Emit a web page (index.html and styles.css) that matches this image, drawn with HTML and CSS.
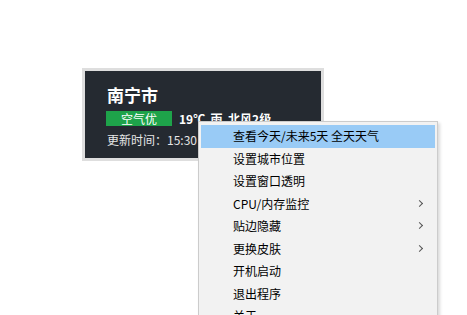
FILE: index.html
```html
<!DOCTYPE html>
<html>
<head>
  <title>天气</title>
  <link rel="stylesheet" href="styles.css">
</head>
<body>
  <div class="widget">
    <div class="city">南宁市</div>
    <div class="now">
      <span class="aqi">空气优</span>
      <span class="info">19℃&nbsp; 雨&nbsp; 北风2级</span>
    </div>
    <div class="update">更新时间：15:30</div>
  </div>

  <ul class="menu">
    <li class="active">查看今天/未来5天 全天天气</li>
    <li>设置城市位置</li>
    <li>设置窗口透明</li>
    <li class="sub">CPU/内存监控</li>
    <li class="sub">贴边隐藏</li>
    <li class="sub">更换皮肤</li>
    <li>开机启动</li>
    <li>退出程序</li>
    <li>关于</li>
  </ul>
</body>
</html>
```

FILE: styles.css
```css
body {
  margin: 0;
  background-color: #fff;
  font-family: "Noto Sans CJK SC", "Noto Sans", sans-serif;
  height: 315px;
  overflow: hidden;
  position: relative;
}

.widget {
  position: absolute;
  left: 82px;
  top: 68px;
  width: 236px;
  height: 87px;
  background-color: #252a31;
  border: 3px solid #dedede;
  color: #fff;
}

.city {
  margin: 12px 0 0 22px;
  font-size: 17px;
  font-weight: bold;
  line-height: 24px;
}

.now {
  display: flex;
  align-items: center;
  margin: 4px 0 0 21px;
  height: 15px;
}

.aqi {
  display: inline-block;
  width: 66px;
  height: 15px;
  line-height: 15px;
  background-color: #1ea34a;
  text-align: center;
  font-size: 12px;
}

.info {
  margin-left: 7px;
  font-size: 12px;
  font-weight: bold;
}

.update {
  margin: 5px 0 0 22px;
  font-size: 12px;
  color: #e6e6e6;
  line-height: 18px;
}

.menu {
  position: absolute;
  left: 198px;
  top: 121px;
  width: 234px;
  margin: 0;
  padding: 3px 2px;
  list-style: none;
  background-color: #f2f2f2;
  border: 1px solid #cccccc;
  box-shadow: 2px 2px 3px rgba(0, 0, 0, 0.15);
  font-size: 12px;
  color: #000;
}

.menu li {
  position: relative;
  height: 22.5px;
  line-height: 22.5px;
  padding-left: 32px;
}

.menu li.active {
  background-color: #99cbf6;
}

.menu li.sub::after {
  content: "";
  position: absolute;
  right: 13px;
  top: 8px;
  width: 4px;
  height: 4px;
  border-top: 1px solid #555;
  border-right: 1px solid #555;
  transform: rotate(45deg);
}
```
